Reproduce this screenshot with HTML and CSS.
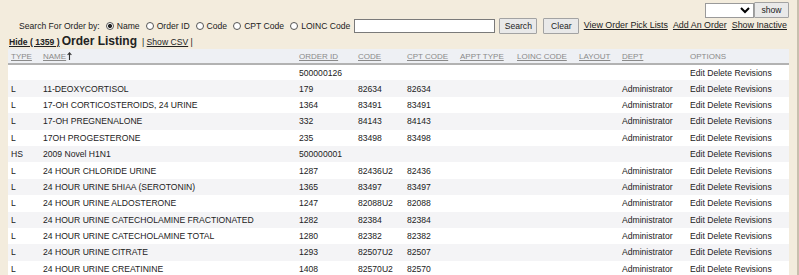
FILE: index.html
```html
<!DOCTYPE html>
<html>
<head lang="en">
    <meta charset="UTF-8">
    <title>Order Listing</title>
    <link rel="stylesheet" href="styles.css">
</head>
<body>
<div id="topbar">
    <select class="pick"><option></option></select>
    <button class="btn btn-show">show</button>
</div>
<div id="searchbar">
    <form class="search-form">
        <span class="label">Search For Order by:</span>
        <label><input type="radio" name="by" checked>Name</label>
        <label><input type="radio" name="by">Order ID</label>
        <label><input type="radio" name="by">Code</label>
        <label><input type="radio" name="by">CPT Code</label>
        <label><input type="radio" name="by">LOINC Code</label>
        <input type="text" class="query">
        <button type="button" class="btn btn-search">Search</button>
        <button type="button" class="btn btn-clear">Clear</button>
    </form>
    <div class="links">
        <a href="#">View Order Pick Lists</a>
        <a href="#">Add An Order</a>
        <a href="#">Show Inactive</a>
    </div>
</div>
<div id="title">
    <a href="#" class="hide">Hide ( 1359 )</a>
    <span class="heading">Order Listing</span>
    <span class="csv">| <a href="#">Show CSV</a> |</span>
</div>
<table id="orders">
    <thead>
    <tr>
        <th class="c-type"><a href="#">TYPE</a></th>
        <th class="c-name"><a href="#">NAME</a> <svg class="sort" width="5" height="8" viewBox="0 0 5 8"><path d="M2.5 8V1.2M0.6 3L2.5 0.8 4.4 3" fill="none" stroke="#333" stroke-width="1.1"/></svg></th>
        <th class="c-id"><a href="#">ORDER ID</a></th>
        <th class="c-code"><a href="#">CODE</a></th>
        <th class="c-cpt"><a href="#">CPT CODE</a></th>
        <th class="c-appt"><a href="#">APPT TYPE</a></th>
        <th class="c-loinc"><a href="#">LOINC CODE</a></th>
        <th class="c-layout"><a href="#">LAYOUT</a></th>
        <th class="c-dept"><a href="#">DEPT</a></th>
        <th class="c-opt">OPTIONS</th>
    </tr>
    </thead>
    <tbody>
    <tr><td></td><td></td><td>500000126</td><td></td><td></td><td></td><td></td><td></td><td></td><td>Edit Delete Revisions</td></tr>
    <tr><td>L</td><td>11-DEOXYCORTISOL</td><td>179</td><td>82634</td><td>82634</td><td></td><td></td><td></td><td>Administrator</td><td>Edit Delete Revisions</td></tr>
    <tr><td>L</td><td>17-OH CORTICOSTEROIDS, 24 URINE</td><td>1364</td><td>83491</td><td>83491</td><td></td><td></td><td></td><td>Administrator</td><td>Edit Delete Revisions</td></tr>
    <tr><td>L</td><td>17-OH PREGNENALONE</td><td>332</td><td>84143</td><td>84143</td><td></td><td></td><td></td><td>Administrator</td><td>Edit Delete Revisions</td></tr>
    <tr><td>L</td><td>17OH PROGESTERONE</td><td>235</td><td>83498</td><td>83498</td><td></td><td></td><td></td><td>Administrator</td><td>Edit Delete Revisions</td></tr>
    <tr><td>HS</td><td>2009 Novel H1N1</td><td>500000001</td><td></td><td></td><td></td><td></td><td></td><td></td><td>Edit Delete Revisions</td></tr>
    <tr><td>L</td><td>24 HOUR CHLORIDE URINE</td><td>1287</td><td>82436U2</td><td>82436</td><td></td><td></td><td></td><td>Administrator</td><td>Edit Delete Revisions</td></tr>
    <tr><td>L</td><td>24 HOUR URINE 5HIAA (SEROTONIN)</td><td>1365</td><td>83497</td><td>83497</td><td></td><td></td><td></td><td>Administrator</td><td>Edit Delete Revisions</td></tr>
    <tr><td>L</td><td>24 HOUR URINE ALDOSTERONE</td><td>1247</td><td>82088U2</td><td>82088</td><td></td><td></td><td></td><td>Administrator</td><td>Edit Delete Revisions</td></tr>
    <tr><td>L</td><td>24 HOUR URINE CATECHOLAMINE FRACTIONATED</td><td>1282</td><td>82384</td><td>82384</td><td></td><td></td><td></td><td>Administrator</td><td>Edit Delete Revisions</td></tr>
    <tr><td>L</td><td>24 HOUR URINE CATECHOLAMINE TOTAL</td><td>1280</td><td>82382</td><td>82382</td><td></td><td></td><td></td><td>Administrator</td><td>Edit Delete Revisions</td></tr>
    <tr><td>L</td><td>24 HOUR URINE CITRATE</td><td>1293</td><td>82507U2</td><td>82507</td><td></td><td></td><td></td><td>Administrator</td><td>Edit Delete Revisions</td></tr>
    <tr><td>L</td><td>24 HOUR URINE CREATININE</td><td>1408</td><td>82570U2</td><td>82570</td><td></td><td></td><td></td><td>Administrator</td><td>Edit Delete Revisions</td></tr>
    </tbody>
</table>
</body>
</html>
```
FILE: styles.css
```css
* {
    box-sizing: border-box;
}

html {
    background: #f3ecdd;
    border-right: 2px solid #c8bfae;
    min-height: 100%;
}

body {
    margin: 0 8px;
    padding-top: 2px;
    font-family: "Liberation Sans", Arial, sans-serif;
    font-size: 8.6px;
    color: #222;
}

a {
    color: #222;
}

.btn {
    font-family: "Liberation Sans", Arial, sans-serif;
    font-size: 8.6px;
    color: #222;
    background: #e9e9e9;
    border: 1px solid #a3a3a3;
    border-radius: 1px;
    padding: 0;
    height: 16px;
}

/* top row: pick list select */
#topbar {
    display: flex;
    justify-content: flex-end;
    align-items: center;
    height: 16px;
}

.pick {
    width: 49px;
    height: 15px;
    font-size: 8px;
    background: #fff;
    border: 1px solid #9a9a9a;
    border-radius: 0;
    margin: 0;
}

.btn-show {
    width: 35px;
}

/* search row */
#searchbar {
    display: flex;
    justify-content: space-between;
    align-items: center;
    height: 16px;
}

.search-form {
    display: flex;
    align-items: center;
    margin: 0 0 0 11px;
}

.search-form label {
    display: flex;
    align-items: center;
    margin-left: 6px;
}

.search-form input[type=radio] {
    appearance: none;
    width: 8px;
    height: 8px;
    margin: 0 3px 0 0;
    border: 1px solid #555;
    border-radius: 50%;
    background: #fff;
}

.search-form input[type=radio]:checked {
    background: radial-gradient(circle, #222 0, #222 1.8px, #fff 2.3px);
}

.query {
    width: 141px;
    height: 14px;
    margin-left: 4px;
    border: 1px solid #7a7a7a;
    background: #fff;
}

.btn-search {
    width: 38px;
    margin-left: 4px;
}

.btn-clear {
    width: 36px;
    margin-left: 6px;
}

.links {
    display: flex;
    gap: 5px;
    padding-right: 2px;
    margin-top: -3px;
    font-size: 8.9px;
}

/* title line */
#title {
    display: flex;
    align-items: baseline;
    height: 15px;
    padding-left: 1px;
}

.hide {
    font-weight: bold;
}

.heading {
    font-size: 12px;
    font-weight: bold;
    margin: 0 5px 0 2px;
}

/* listing table */
#orders {
    width: 100%;
    border-collapse: collapse;
    background: #fff;
    table-layout: fixed;
}

#orders th {
    background: #eef0f4;
    border-bottom: 2px solid #b2b2b2;
    height: 15px;
    text-align: left;
    font-weight: normal;
    font-size: 8px;
    color: #8a8a8a;
    padding: 0 3px;
}

#orders th a {
    color: #8a8a8a;
}

.sort {
    vertical-align: -1px;
    margin-left: -1px;
}

#orders td {
    height: 16.4px;
    padding: 0 3px;
    white-space: nowrap;
}

#orders tbody tr:nth-child(even) td {
    background: #f4f4f6;
}

.c-type { width: 32px; }
.c-name { width: 256px; }
.c-id { width: 59px; }
.c-code { width: 49px; }
.c-cpt { width: 53px; }
.c-appt { width: 57px; }
.c-loinc { width: 62px; }
.c-layout { width: 43px; }
.c-dept { width: 68px; }
```
